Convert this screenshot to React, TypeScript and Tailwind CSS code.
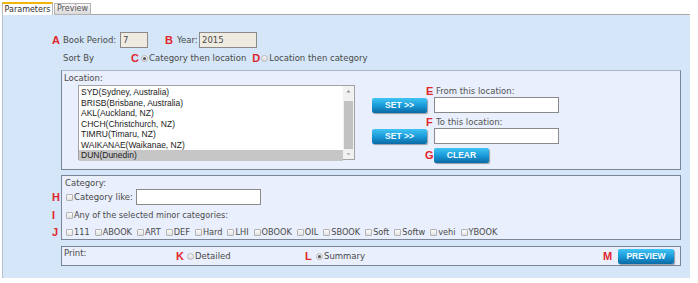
const font = "font-['DejaVu_Sans',Verdana,sans-serif]";

function Letter({ ch, className = '' }: { ch: string; className?: string }) {
  return (
    <span
      className={`text-[11px] leading-none font-bold text-[#e1252c] font-['Liberation_Sans',Arial,sans-serif] ${className}`}
    >
      {ch}
    </span>
  );
}

function Check() {
  return (
    <span className="inline-block w-[7px] h-[7px] shrink-0 rounded-[1px] border border-[#b3b3b3] bg-gradient-to-b from-[#fbfbfb] to-[#e2e2e2]" />
  );
}

function Radio({ checked }: { checked?: boolean }) {
  return (
    <span className="inline-flex w-[7px] h-[7px] shrink-0 items-center justify-center rounded-full border border-[#bababa] bg-gradient-to-b from-[#f6f6f6] to-[#d9d9d9]">
      {checked && <span className="w-[3px] h-[3px] rounded-full bg-[#555]" />}
    </span>
  );
}

function BlueButton({ label, w }: { label: string; w: string }) {
  return (
    <div
      className={`${w} h-[15px] shrink-0 flex items-center justify-center rounded-[2px] bg-gradient-to-b from-[#3fc4f4] via-[#1a9bd9] to-[#0b6aa5] shadow-[1px_1px_1px_rgba(0,0,0,0.35)] text-[#f4fbff] text-[8.5px] font-bold font-['Liberation_Sans',Arial,sans-serif]`}
    >
      {label}
    </div>
  );
}

const locations = [
  'SYD(Sydney, Australia)',
  'BRISB(Brisbane, Australia)',
  'AKL(Auckland, NZ)',
  'CHCH(Christchurch, NZ)',
  'TIMRU(Timaru, NZ)',
  'WAIKANAE(Waikanae, NZ)',
  'DUN(Dunedin)',
];

const minorCats = ['111', 'ABOOK', 'ART', 'DEF', 'Hard', 'LHI', 'OBOOK', 'OIL', 'SBOOK', 'Soft', 'Softw', 'vehi', 'YBOOK'];

export default function App() {
  return (
    <div className={`w-[698px] h-[283px] bg-white overflow-hidden text-[8.5px] text-[#4a4a4a] ${font}`}>
      {/* Tabs */}
      <div className="w-[690px] h-[15px] flex items-end pl-[2px]">
        <div className="w-[51px] h-[13px] bg-white border border-[#b9b9b9] border-t-2 border-t-[#f0b60a] border-b-0 flex items-center justify-center text-[8px] text-[#333]">
          Parameters
        </div>
        <div className="ml-[1px] w-[37px] h-[12px] bg-gradient-to-b from-[#f9f9f9] to-[#dadada] border border-[#b3b3b3] flex items-center justify-center text-[8px] text-[#555]">
          Preview
        </div>
        <div className="flex-1 border-b border-[#a9a9a9]" />
      </div>

      {/* Panel */}
      <div className="ml-[2px] w-[688px] h-[263px] bg-[#d4e6f7] border-l border-[#b4c2d0] pt-[17px]">
        {/* Book period / Year */}
        <div className="h-[16px] flex items-center pl-[49px]">
          <Letter ch="A" className="w-[11px]" />
          <span className="w-[57px]">Book Period:</span>
          <div className="w-[28px] h-[16px] border border-[#8a8a8a] bg-[#efebe1] flex items-center px-[2px]">7</div>
          <Letter ch="B" className="ml-[17px] w-[12px]" />
          <span className="w-[22px]">Year:</span>
          <div className="w-[58px] h-[16px] border border-[#8a8a8a] bg-[#efebe1] flex items-center px-[2px]">2015</div>
        </div>

        {/* Sort by */}
        <div className="mt-[4px] h-[12px] flex items-center pl-[60px]">
          <span className="w-[68px]">Sort By</span>
          <Letter ch="C" className="w-[10px]" />
          <Radio checked />
          <span className="ml-[1px]">Category then location</span>
          <Letter ch="D" className="ml-[6px] w-[9px]" />
          <Radio />
          <span className="ml-[1px]">Location then category</span>
        </div>

        {/* Location box */}
        <div className="mt-[6px] ml-[58px] w-[620px] h-[100px] border border-[#7a8698] border-t-[#aab6c8] bg-[#e9effc] pt-[2px] pl-[2px]">
          <div className="h-[10px] leading-[10px]">Location:</div>
          <div className="mt-[2px] flex">
            <div className="ml-[14px] w-[277px] h-[75px] border border-[#a3a3a3] bg-white flex">
              <div className="flex-1 pt-[1px] font-['Liberation_Sans',Arial,sans-serif] text-[8.5px] text-[#1c1c1c]">
                {locations.map((l) => (
                  <div
                    key={l}
                    className={`h-[10.5px] leading-[10.5px] pl-[2px] ${l.startsWith('DUN') ? 'bg-[#c6c6c6]' : ''}`}
                  >
                    {l}
                  </div>
                ))}
              </div>
              <div className="w-[11px] bg-[#f1f1f1] flex flex-col items-center">
                <svg width="5" height="11" viewBox="0 0 5 11" className="shrink-0">
                  <path d="M0.5 6.5 L2.5 4 L4.5 6.5 Z" fill="#8f8f8f" />
                </svg>
                <div className="mt-[4px] w-[9px] h-[48px] bg-[#c2c2c2]" />
                <div className="flex-1" />
                <svg width="5" height="9" viewBox="0 0 5 9" className="shrink-0">
                  <path d="M0.5 3 L2.5 5.5 L4.5 3 Z" fill="#b5b5b5" />
                </svg>
              </div>
            </div>

            <div className="ml-[17px] flex flex-col">
              <div className="h-[12px] flex items-center pl-[54px]">
                <Letter ch="E" className="w-[10px]" />
                <span className="text-[#555]">From this location:</span>
              </div>
              <div className="h-[16px] flex items-center">
                <BlueButton label="SET >>" w="w-[55px]" />
                <div className="ml-[7px] w-[125px] h-[16px] border border-[#8a8a8a] bg-white" />
              </div>
              <div className="mt-[3px] h-[12px] flex items-center pl-[54px]">
                <Letter ch="F" className="w-[10px]" />
                <span className="text-[#555]">To this location:</span>
              </div>
              <div className="h-[16px] flex items-center">
                <BlueButton label="SET >>" w="w-[55px]" />
                <div className="ml-[7px] w-[125px] h-[16px] border border-[#8a8a8a] bg-white" />
              </div>
              <div className="mt-[3px] h-[16px] flex items-center pl-[53px]">
                <Letter ch="G" className="w-[9px]" />
                <BlueButton label="CLEAR" w="w-[55px]" />
              </div>
            </div>
          </div>
        </div>

        {/* Category box */}
        <div className="mt-[5px] ml-[58px] w-[620px] h-[65px] border border-[#7a8698] bg-[#e9effc] pt-[2px] pl-[3px]">
          <div className="h-[10px] leading-[10px]">Category:</div>
          <div className="mt-[1px] h-[16px] flex items-center">
            <Letter ch="H" className="-ml-[13px] w-[9px] mr-[5px]" />
            <Check />
            <span className="ml-[1px] w-[62px]">Category like:</span>
            <div className="w-[125px] h-[16px] border border-[#8a8a8a] bg-white" />
          </div>
          <div className="mt-[4px] h-[12px] flex items-center">
            <Letter ch="I" className="-ml-[13px] w-[9px] mr-[5px]" />
            <Check />
            <span className="ml-[1px] text-[8.2px]">Any of the selected minor categories:</span>
          </div>
          <div className="mt-[5px] h-[12px] flex items-center">
            <Letter ch="J" className="-ml-[13px] w-[9px] mr-[5px]" />
            <div className="flex items-center gap-[5px] text-[8.2px]">
              {minorCats.map((c) => (
                <span key={c} className="flex items-center gap-[1px]">
                  <Check />
                  <span>{c}</span>
                </span>
              ))}
            </div>
          </div>
        </div>

        {/* Print box */}
        <div className="mt-[6px] ml-[58px] w-[620px] h-[20px] border border-[#7a8698] bg-[#e9effc] pl-[2px] flex items-center">
          <span className="self-start mt-[1px] w-[112px] leading-[10px]">Print:</span>
          <div className="w-[129px] flex items-center">
            <Letter ch="K" className="w-[11px]" />
            <Radio />
            <span className="ml-[1px]">Detailed</span>
          </div>
          <div className="flex items-center">
            <Letter ch="L" className="w-[11px]" />
            <Radio checked />
            <span className="ml-[1px]">Summary</span>
          </div>
          <div className="flex-1" />
          <Letter ch="M" className="w-[15px]" />
          <div className="mr-[6px]">
            <BlueButton label="PREVIEW" w="w-[56px]" />
          </div>
        </div>
      </div>
    </div>
  );
}
